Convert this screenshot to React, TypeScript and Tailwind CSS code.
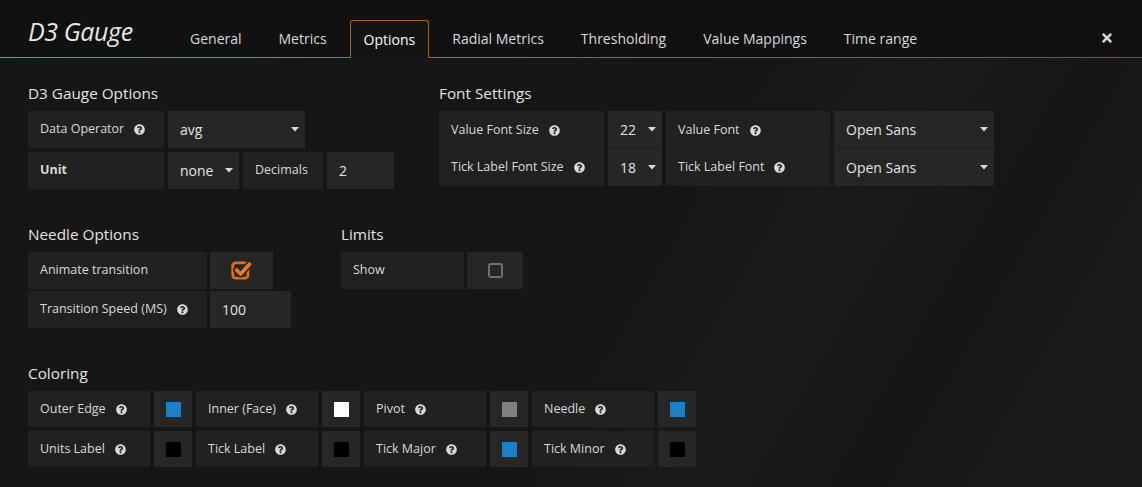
import { FaQuestionCircle, FaTimes } from "react-icons/fa";

const tabs = ["General", "Metrics", "Options", "Radial Metrics", "Thresholding", "Value Mappings", "Time range"];

const colorRows = [
  [
    { label: "Outer Edge", color: "bg-[#1f7fc4]" },
    { label: "Inner (Face)", color: "bg-white" },
    { label: "Pivot", color: "bg-[#808080]" },
    { label: "Needle", color: "bg-[#1f7fc4]" },
  ],
  [
    { label: "Units Label", color: "bg-black" },
    { label: "Tick Label", color: "bg-black" },
    { label: "Tick Major", color: "bg-[#1f7fc4]" },
    { label: "Tick Minor", color: "bg-black" },
  ],
];

// ─── Bits ─────────────────────────────────────────────────────────────────────

function Help() {
  return <FaQuestionCircle className="shrink-0 text-[#d8d9da]" size={11} />;
}

function Caret() {
  return (
    <svg width="8" height="5" viewBox="0 0 8 5" className="shrink-0">
      <path d="M0 0h8L4 4.5z" fill="#d8d9da" />
    </svg>
  );
}

function Label({ text, w, help, bold, h = "h-[37px]" }: { text: string; w: string; help?: boolean; bold?: boolean; h?: string }) {
  return (
    <div className={`${w} ${h} bg-[#212121] flex items-center gap-[10px] px-3 text-[12.5px] text-[#d8d9da] ${bold ? "font-bold" : ""}`}>
      <span className="whitespace-nowrap">{text}</span>
      {help && <Help />}
    </div>
  );
}

function Select({ value, w, pr = "pr-[6px]", h = "h-[37px]" }: { value: string; w: string; pr?: string; h?: string }) {
  return (
    <div className={`${w} ${h} bg-[#262626] flex items-center justify-between pl-3 ${pr} text-[14px] text-[#e3e3e3]`}>
      <span>{value}</span>
      <Caret />
    </div>
  );
}

function Input({ value, w, h = "h-[37px]" }: { value: string; w: string; h?: string }) {
  return (
    <div className={`${w} ${h} bg-[#262626] flex items-center px-[12px] text-[14px] text-[#e3e3e3]`}>{value}</div>
  );
}

function Heading({ children }: { children: React.ReactNode }) {
  return <div className="text-[15.3px] leading-[20px] text-[#e3e3e3] mb-[8px] whitespace-nowrap">{children}</div>;
}

function CheckedBox() {
  return (
    <svg width="21" height="21" viewBox="0 0 18 18">
      <rect x="1.5" y="2.5" width="13" height="13" rx="2.5" fill="none" stroke="#e0701a" strokeWidth="2.4" />
      <path d="M4.8 8.6 L8.2 12 L15.8 3.6" fill="none" stroke="#262626" strokeWidth="6" strokeLinecap="round" strokeLinejoin="round" />
      <path d="M4.8 8.6 L8.2 12 L15.8 3.6" fill="none" stroke="#eb7b18" strokeWidth="3.2" strokeLinecap="round" strokeLinejoin="round" />
    </svg>
  );
}

// ─── App ──────────────────────────────────────────────────────────────────────

export default function App() {
  return (
    <div className="w-[1142px] h-[487px] overflow-hidden bg-[#161616] font-['Open_Sans',sans-serif] text-[#d8d9da] bg-[linear-gradient(120deg,#161616_55%,#1a1a1a_68%,#161616_80%,#1a1a1a_92%)]">
      {/* ── Header ── */}
      <div className="relative bg-[#111111]">
        <div className="flex items-end h-[57px] px-[28px]">
          <div className="self-start pt-[16px] w-[148px] text-[25px] leading-[30px] italic tracking-[-0.4px] text-[#e6e6e6] whitespace-nowrap">
            D3 Gauge
          </div>
          <div className="flex gap-[9px]">
            {tabs.map((t) =>
              t === "Options" ? (
                <div
                  key={t}
                  className="relative z-10 -mb-px h-[38px] px-[13px] flex items-center pb-px text-[14px] text-white bg-[#141414] border border-b-0 border-[#a8651a] rounded-t-[3px]"
                >
                  {t}
                </div>
              ) : (
                <div key={t} className="h-[37px] px-[14px] flex items-center text-[14px] text-[#d8d9da] whitespace-nowrap">
                  {t}
                </div>
              )
            )}
          </div>
          <FaTimes className="ml-auto mb-[12px] text-[#d8d9da]" size={14} />
        </div>
        <div className="h-px bg-[linear-gradient(to_right,#ab8a20,#b0681a_35%,#c2300f)]" />
      </div>

      {/* ── Body ── */}
      <div className="px-[28px] pt-[25px]">
        <div className="flex gap-[45px]">
          <div>
            <Heading>D3 Gauge Options</Heading>
            <div className="flex flex-col gap-[4px]">
              <div className="flex gap-[4px]">
                <Label text="Data Operator" w="w-[136px]" help />
                <Select value="avg" w="w-[137px]" />
              </div>
              <div className="flex gap-[4px]">
                <Label text="Unit" w="w-[136px]" bold />
                <Select value="none" w="w-[71px]" />
                <Label text="Decimals" w="w-[80px]" />
                <Input value="2" w="w-[67px]" />
              </div>
            </div>
          </div>

          <div>
            <Heading>Font Settings</Heading>
            <div className="flex flex-col">
              <div className="flex gap-[4px]">
                <Label text="Value Font Size" w="w-[165px]" help h="h-[38px]" />
                <div className="border-b border-[#1d1d1d]">
                  <Select value="22" w="w-[54px]" h="h-[37px]" />
                </div>
                <Label text="Value Font" w="w-[164px]" help h="h-[38px]" />
                <div className="border-b border-[#1d1d1d]">
                  <Select value="Open Sans" w="w-[160px]" h="h-[37px]" />
                </div>
              </div>
              <div className="flex gap-[4px]">
                <Label text="Tick Label Font Size" w="w-[165px]" help />
                <Select value="18" w="w-[54px]" />
                <Label text="Tick Label Font" w="w-[164px]" help />
                <Select value="Open Sans" w="w-[160px]" />
              </div>
            </div>
          </div>
        </div>

        <div className="flex gap-[50px] mt-[35px]">
          <div>
            <Heading>Needle Options</Heading>
            <div className="flex flex-col gap-[2px]">
              <div className="flex gap-[3px]">
                <Label text="Animate transition" w="w-[179px]" />
                <div className="w-[63px] h-[37px] bg-[#262626] flex items-center justify-center">
                  <CheckedBox />
                </div>
              </div>
              <div className="flex gap-[3px]">
                <Label text="Transition Speed (MS)" w="w-[179px]" help />
                <Input value="100" w="w-[81px]" />
              </div>
            </div>
          </div>
          <div>
            <Heading>Limits</Heading>
            <div className="flex gap-[3px]">
              <Label text="Show" w="w-[123px]" />
              <div className="w-[56px] h-[37px] bg-[#262626] flex items-center justify-center">
                <div className="w-[15px] h-[15px] rounded-[3px] border-2 border-[#6f6f6f]" />
              </div>
            </div>
          </div>
        </div>

        <div className="mt-[35px]">
          <Heading>Coloring</Heading>
          <div className="flex flex-col gap-[4px]">
            {colorRows.map((row, i) => (
              <div key={i} className="flex gap-[4px]">
                {row.map((c) => (
                  <div key={c.label} className="flex gap-[4px]">
                    <Label text={c.label} w="w-[122px]" help h="h-[36px]" />
                    <div className="w-[38px] h-[36px] bg-[#262626] flex items-center justify-center">
                      <div className={`w-[15px] h-[15px] ${c.color}`} />
                    </div>
                  </div>
                ))}
              </div>
            ))}
          </div>
        </div>
      </div>
    </div>
  );
}
